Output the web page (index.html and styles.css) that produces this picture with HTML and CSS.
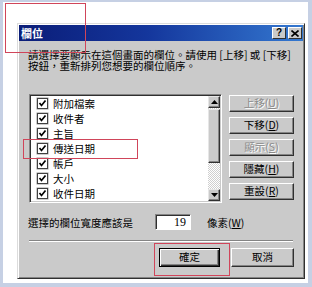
FILE: index.html
```html
<!DOCTYPE html>
<html lang="zh-Hant">
<head>
    <meta charset="UTF-8">
    <title>欄位</title>
    <link rel="stylesheet" href="styles.css">
</head>
<body>

    <div class="sheet">
        <!-- Dialog -->
        <div class="dialog">
            <div class="title-bar">
                <span class="title-text">欄位</span>
                <div class="title-buttons">
                    <span class="title-btn">?</span>
                    <span class="title-btn close">
                        <svg width="8" height="7" viewBox="0 0 8 7"><path d="M0.5 0.5 L7.5 6.5 M7.5 0.5 L0.5 6.5" stroke="#000" stroke-width="1.6"/></svg>
                    </span>
                </div>
            </div>

            <div class="content">
                <p class="intro">請選擇要顯示在這個畫面的欄位。請使用 [上移] 或 [下移]<br>按鈕，重新排列您想要的欄位順序。</p>

                <div class="list-row">
                    <div class="listbox">
                        <ul class="items">
                            <li><span class="check"><svg width="9" height="9" viewBox="0 0 9 9"><path d="M1.5 4 L3.5 6.5 L7.5 1.5" stroke="#000" stroke-width="1.7" fill="none"/></svg></span>附加檔案</li>
                            <li><span class="check"><svg width="9" height="9" viewBox="0 0 9 9"><path d="M1.5 4 L3.5 6.5 L7.5 1.5" stroke="#000" stroke-width="1.7" fill="none"/></svg></span>收件者</li>
                            <li><span class="check"><svg width="9" height="9" viewBox="0 0 9 9"><path d="M1.5 4 L3.5 6.5 L7.5 1.5" stroke="#000" stroke-width="1.7" fill="none"/></svg></span>主旨</li>
                            <li><span class="check"><svg width="9" height="9" viewBox="0 0 9 9"><path d="M1.5 4 L3.5 6.5 L7.5 1.5" stroke="#000" stroke-width="1.7" fill="none"/></svg></span>傳送日期</li>
                            <li><span class="check"><svg width="9" height="9" viewBox="0 0 9 9"><path d="M1.5 4 L3.5 6.5 L7.5 1.5" stroke="#000" stroke-width="1.7" fill="none"/></svg></span>帳戶</li>
                            <li><span class="check"><svg width="9" height="9" viewBox="0 0 9 9"><path d="M1.5 4 L3.5 6.5 L7.5 1.5" stroke="#000" stroke-width="1.7" fill="none"/></svg></span>大小</li>
                            <li><span class="check"><svg width="9" height="9" viewBox="0 0 9 9"><path d="M1.5 4 L3.5 6.5 L7.5 1.5" stroke="#000" stroke-width="1.7" fill="none"/></svg></span>收件日期</li>
                        </ul>
                        <div class="scrollbar">
                            <span class="arrow-btn"><svg width="7" height="4" viewBox="0 0 7 4"><path d="M0 4 L3.5 0 L7 4 Z" fill="#000"/></svg></span>
                            <span class="thumb"></span>
                            <span class="track"></span>
                            <span class="arrow-btn"><svg width="7" height="4" viewBox="0 0 7 4"><path d="M0 0 L3.5 4 L7 0 Z" fill="#000"/></svg></span>
                        </div>
                    </div>

                    <div class="side-buttons">
                        <button class="btn disabled">上移(<u>U</u>)</button>
                        <button class="btn">下移(<u>D</u>)</button>
                        <button class="btn disabled">顯示(<u>S</u>)</button>
                        <button class="btn">隱藏(<u>H</u>)</button>
                        <button class="btn">重設(<u>R</u>)</button>
                    </div>
                </div>

                <div class="width-row">
                    <span class="width-label">選擇的欄位寬度應該是</span>
                    <span class="width-input">19</span>
                    <span class="unit">像素(<u>W</u>)</span>
                </div>

                <div class="separator"></div>

                <div class="footer">
                    <button class="btn default">確定</button>
                    <button class="btn wide">取消</button>
                </div>
            </div>
        </div>
    </div>

    <!-- Red annotation boxes -->
    <div class="mark mark-title"></div>
    <div class="mark mark-item"></div>
    <div class="mark mark-ok"></div>

</body>
</html>
```

FILE: styles.css
```css
* {
    margin: 0;
    padding: 0;
    box-sizing: border-box;
}

body {
    position: relative;
    width: 312px;
    height: 287px;
    overflow: hidden;
    background: #c6d0e4;
    font-family: "Noto Sans CJK TC", "Liberation Sans", sans-serif;
    font-size: 10.5px;
    color: #000;
}

.sheet {
    margin: 2px 4px 0 3px;
    height: 281px;
    background: #fff;
    padding: 21px 0 0 14px;
}

/* Dialog window */
.dialog {
    width: 288px;
    height: 256px;
    background: #cacaca;
    border: 1px solid;
    border-color: #dcdcdc #303030 #303030 #dcdcdc;
    box-shadow: inset 1px 1px #fff, inset -1px -1px #848484;
    padding: 1px;
}

.title-bar {
    height: 16px;
    display: flex;
    align-items: center;
    justify-content: space-between;
    padding: 0 1px 0 2px;
    background: linear-gradient(90deg, #0b1d78 0%, #14369c 45%, #3478d0 100%);
}

.title-text {
    color: #fff;
    font-weight: bold;
    font-size: 11px;
    line-height: 16px;
}

.title-buttons {
    display: flex;
    gap: 2px;
}

.title-btn {
    width: 14px;
    height: 12px;
    display: flex;
    align-items: center;
    justify-content: center;
    background: #cacaca;
    border: 1px solid;
    border-color: #fff #303030 #303030 #fff;
    font-family: "Liberation Sans", sans-serif;
    font-weight: bold;
    font-size: 10px;
    line-height: 1;
}

.content {
    padding: 8px 9px 0 9px;
}

.intro {
    line-height: 11px;
    white-space: nowrap;
}

/* List and buttons */
.list-row {
    display: flex;
    margin-top: 23px;
    gap: 7px;
}

.listbox {
    margin-left: 1px;
    width: 193px;
    height: 109px;
    display: flex;
    background: #fff;
    border: 1px solid;
    border-color: #848484 #fff #fff #848484;
    box-shadow: inset 1px 1px #303030, inset -1px -1px #cacaca;
    padding: 1px;
}

.items {
    flex: 1;
    list-style: none;
}

.items li {
    height: 15px;
    display: flex;
    align-items: center;
    gap: 5px;
    padding-left: 6px;
    line-height: 15px;
}

.check {
    width: 11px;
    height: 11px;
    display: flex;
    align-items: center;
    justify-content: center;
    background: #fff;
    border: 1px solid #404040;
    box-shadow: 0 0 0 0.5px #9a9a9a;
}

.scrollbar {
    width: 12px;
    display: flex;
    flex-direction: column;
    background: repeating-conic-gradient(#fff 0 25%, #cfcfcf 0 50%) 0 0 / 2px 2px;
}

.arrow-btn,
.thumb {
    display: flex;
    align-items: center;
    justify-content: center;
    background: #cacaca;
    border: 1px solid;
    border-color: #e6e6e6 #303030 #303030 #e6e6e6;
    box-shadow: inset -1px -1px #848484;
}

.arrow-btn {
    height: 12px;
}

.thumb {
    margin-top: 1px;
    height: 54px;
}

.track {
    flex: 1;
}

.side-buttons {
    padding-top: 1px;
    display: flex;
    flex-direction: column;
    gap: 5px;
}

.btn {
    width: 65px;
    height: 17px;
    font-family: inherit;
    font-size: 10.5px;
    line-height: 1;
    color: #000;
    background: #cacaca;
    border: 1px solid;
    border-color: #fff #303030 #303030 #fff;
    box-shadow: inset -1px -1px #848484;
}

.btn.disabled {
    color: #8a8a8a;
    text-shadow: 1px 1px #fff;
}

.btn u {
    text-decoration-thickness: 1px;
}

/* Width input row */
.width-row {
    display: flex;
    align-items: center;
    margin-top: 11px;
    height: 16px;
}

.width-label {
    width: 127px;
}

.width-input {
    width: 36px;
    height: 16px;
    padding-right: 4px;
    text-align: right;
    line-height: 14px;
    font-family: "Liberation Serif", serif;
    font-size: 12px;
    background: #fff;
    border: 1px solid;
    border-color: #848484 #fff #fff #848484;
    box-shadow: inset 1px 1px #303030;
}

.unit {
    margin-left: 16px;
}

.separator {
    margin: 10px 0 0 1px;
    width: 264px;
    height: 2px;
    border-top: 1px solid #848484;
    border-bottom: 1px solid #fff;
}

.footer {
    margin-top: 6px;
    display: flex;
    justify-content: flex-end;
    gap: 11px;
}

.footer .btn {
    height: 19px;
}

.btn.default {
    width: 61px;
    border: 1px solid #000;
    box-shadow: inset 1px 1px #fff, inset -1px -1px #303030, inset -2px -2px #848484;
}

.btn.wide {
    width: 63px;
}

/* Annotation boxes drawn over the screenshot */
.mark {
    position: absolute;
    border: 1px solid #d0455a;
}

.mark-title {
    left: 5px;
    top: 3px;
    width: 81px;
    height: 50px;
}

.mark-item {
    left: 23px;
    top: 139px;
    width: 115px;
    height: 20px;
}

.mark-ok {
    left: 154px;
    top: 243px;
    width: 76px;
    height: 33px;
}
```
